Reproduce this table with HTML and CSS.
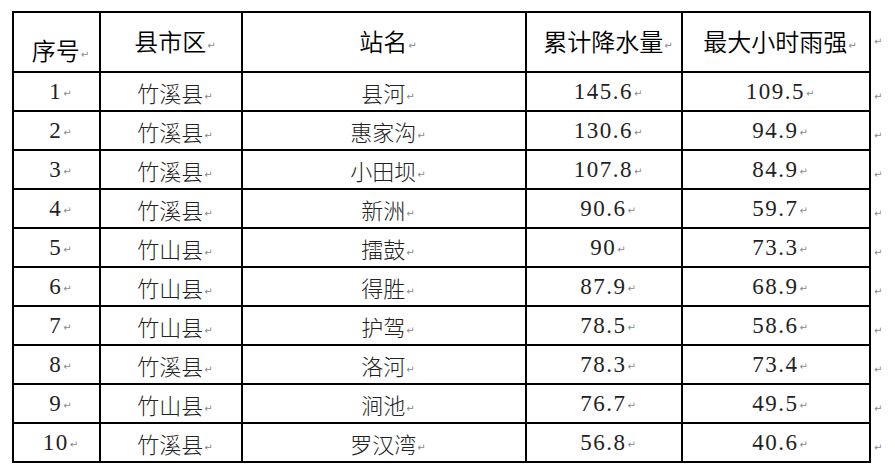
FILE: index.html
```html
<!DOCTYPE html>
<html lang="zh-CN">
<head>
<meta charset="utf-8">
<title>降水量统计</title>
<link rel="stylesheet" href="styles.css">
</head>
<body>
<table class="rain">
  <colgroup>
    <col class="c1"><col class="c2"><col class="c3"><col class="c4"><col class="c5"><col class="c6">
  </colgroup>
  <thead>
    <tr class="head">
      <th class="low">序号<span class="pm">↵</span></th>
      <th>县市区<span class="pm">↵</span></th>
      <th>站名<span class="pm">↵</span></th>
      <th>累计降水量<span class="pm">↵</span></th>
      <th>最大小时雨强<span class="pm">↵</span></th>
      <td class="end top"><span class="pm">↵</span></td>
    </tr>
  </thead>
  <tbody>
    <tr><td class="num">1<span class="pm">↵</span></td><td>竹溪县<span class="pm">↵</span></td><td>县河<span class="pm">↵</span></td><td class="num">145.6<span class="pm">↵</span></td><td class="num">109.5<span class="pm">↵</span></td><td class="end"><span class="pm">↵</span></td></tr>
    <tr><td class="num">2<span class="pm">↵</span></td><td>竹溪县<span class="pm">↵</span></td><td>惠家沟<span class="pm">↵</span></td><td class="num">130.6<span class="pm">↵</span></td><td class="num">94.9<span class="pm">↵</span></td><td class="end"><span class="pm">↵</span></td></tr>
    <tr><td class="num">3<span class="pm">↵</span></td><td>竹溪县<span class="pm">↵</span></td><td>小田坝<span class="pm">↵</span></td><td class="num">107.8<span class="pm">↵</span></td><td class="num">84.9<span class="pm">↵</span></td><td class="end"><span class="pm">↵</span></td></tr>
    <tr><td class="num">4<span class="pm">↵</span></td><td>竹溪县<span class="pm">↵</span></td><td>新洲<span class="pm">↵</span></td><td class="num">90.6<span class="pm">↵</span></td><td class="num">59.7<span class="pm">↵</span></td><td class="end"><span class="pm">↵</span></td></tr>
    <tr><td class="num">5<span class="pm">↵</span></td><td>竹山县<span class="pm">↵</span></td><td>擂鼓<span class="pm">↵</span></td><td class="num">90<span class="pm">↵</span></td><td class="num">73.3<span class="pm">↵</span></td><td class="end"><span class="pm">↵</span></td></tr>
    <tr><td class="num">6<span class="pm">↵</span></td><td>竹山县<span class="pm">↵</span></td><td>得胜<span class="pm">↵</span></td><td class="num">87.9<span class="pm">↵</span></td><td class="num">68.9<span class="pm">↵</span></td><td class="end"><span class="pm">↵</span></td></tr>
    <tr><td class="num">7<span class="pm">↵</span></td><td>竹山县<span class="pm">↵</span></td><td>护驾<span class="pm">↵</span></td><td class="num">78.5<span class="pm">↵</span></td><td class="num">58.6<span class="pm">↵</span></td><td class="end"><span class="pm">↵</span></td></tr>
    <tr><td class="num">8<span class="pm">↵</span></td><td>竹溪县<span class="pm">↵</span></td><td>洛河<span class="pm">↵</span></td><td class="num">78.3<span class="pm">↵</span></td><td class="num">73.4<span class="pm">↵</span></td><td class="end"><span class="pm">↵</span></td></tr>
    <tr><td class="num">9<span class="pm">↵</span></td><td>竹山县<span class="pm">↵</span></td><td>涧池<span class="pm">↵</span></td><td class="num">76.7<span class="pm">↵</span></td><td class="num">49.5<span class="pm">↵</span></td><td class="end"><span class="pm">↵</span></td></tr>
    <tr><td class="num">10<span class="pm">↵</span></td><td>竹溪县<span class="pm">↵</span></td><td>罗汉湾<span class="pm">↵</span></td><td class="num">56.8<span class="pm">↵</span></td><td class="num">40.6<span class="pm">↵</span></td><td class="end"><span class="pm">↵</span></td></tr>
  </tbody>
</table>
</body>
</html>
```

FILE: styles.css
```css
html, body {
  margin: 0;
  padding: 0;
  background: #ffffff;
}

body {
  padding: 11px 0 0 12px;
}

.rain {
  border-collapse: collapse;
  table-layout: fixed;
  width: 877px;
  font-family: "Noto Sans CJK SC", sans-serif;
  color: #111;
}

.c1 { width: 87px; }
.c2 { width: 142px; }
.c3 { width: 284px; }
.c4 { width: 156px; }
.c5 { width: 188px; }
.c6 { width: 20px; }

.rain th,
.rain td {
  border: 2px solid #000;
  padding: 0 0 0 8px;
  text-align: center;
  vertical-align: middle;
  white-space: nowrap;
  line-height: 1;
}

.rain th {
  font-size: 24px;
  font-weight: 350;
  color: #000;
  padding-bottom: 2px;
}

.rain th.low {
  padding-top: 18px;
}

.rain .head {
  height: 60px;
}

.rain tbody tr {
  height: 39px;
}

.rain td {
  font-size: 22px;
  font-weight: 300;
  color: #222;
}

.rain td.num {
  font-family: "Liberation Serif", "Times New Roman", serif;
  font-size: 23px;
  font-weight: 400;
  letter-spacing: 1.5px;
}

.rain td.end {
  border: none;
  padding: 0 0 0 2px;
  text-align: left;
}

.rain td.end.top {
  vertical-align: top;
  padding-top: 14px;
}

.pm {
  font-family: "DejaVu Sans", sans-serif;
  font-size: 10px;
  font-weight: 400;
  color: #8a8a8a;
  letter-spacing: 0;
  margin-left: 1px;
  vertical-align: 2px;
}
```
